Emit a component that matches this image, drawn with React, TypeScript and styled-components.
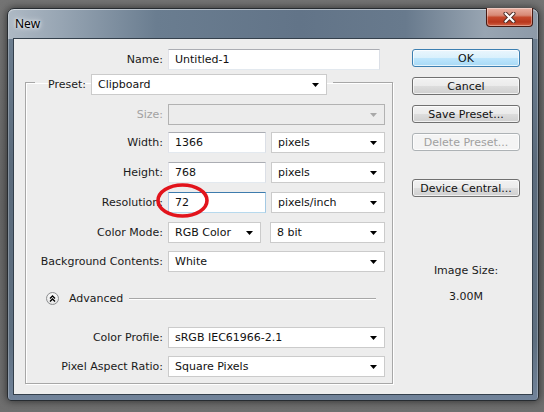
import React from 'react';
import styled, { createGlobalStyle } from 'styled-components';

const GlobalStyle = createGlobalStyle`
  html, body {
    margin: 0;
    padding: 0;
  }
  body {
    background: #6b6b6b;
    font-family: 'DejaVu Sans', Verdana, sans-serif;
    font-size: 11px;
    color: #1a1a1a;
  }
`;

const Desktop = styled.div`
  position: relative;
  width: 544px;
  height: 412px;
  box-sizing: border-box;
  padding: 8px 5px 0 7px;
  overflow: hidden;
  background: linear-gradient(180deg, #747474 0%, #676767 50%, #6f6f6f 100%);
`;

const Window = styled.div`
  width: 532px;
  height: 393px;
  box-sizing: border-box;
  border: 1px solid #272c31;
  border-radius: 7px 7px 4px 4px;
  padding: 0 5px 5px;
  display: flex;
  flex-direction: column;
  background:
    linear-gradient(90deg, #aeb9c4 0%, #97a5b3 10%, #6a7d90 28%, #627488 55%, #687a8d 75%, #98a5b2 90%, #8d9aa8 100%) top / 100% 30px no-repeat,
    linear-gradient(180deg, #6f8193 0%, #5b6b7c 40%, #5e6f80 85%, #71839a 100%);
  box-shadow: 0 0 8px rgba(0, 0, 0, 0.6), inset 0 1px 0 rgba(255, 255, 255, 0.5),
    inset 1px 0 0 rgba(255, 255, 255, 0.25), inset -1px 0 0 rgba(255, 255, 255, 0.25);
`;

const TitleBar = styled.div`
  height: 29px;
  display: flex;
  align-items: center;
`;

const Title = styled.span`
  padding-left: 2px;
  font-family: 'Noto Sans', 'Open Sans', sans-serif;
  font-size: 12px;
  color: #000;
  text-shadow: 0 0 6px #fff, 0 0 3px rgba(255, 255, 255, 0.9);
`;

const CloseButton = styled.div`
  margin: -1px 0 0 auto;
  align-self: flex-start;
  width: 47px;
  height: 19px;
  box-sizing: border-box;
  display: flex;
  align-items: center;
  justify-content: center;
  border: 1px solid #471a12;
  border-top: none;
  border-radius: 0 0 4px 4px;
  background: linear-gradient(180deg, #eab0a2 0%, #d88a76 40%, #c5492c 52%, #b8371d 78%, #d36649 100%);
  box-shadow: inset 0 0 0 1px rgba(255, 255, 255, 0.35);
`;

const Client = styled.div`
  flex: 1;
  display: flex;
  background: #ededed;
  border: 1px solid #34404c;
`;

const FormColumn = styled.div`
  display: flex;
  flex-direction: column;
  padding: 10px 0 0 11px;
`;

const Row = styled.div<{ $nudge?: number }>`
  display: flex;
  align-items: center;
  gap: 5px;
  height: 21px;
  margin-top: ${(p) => p.$nudge ?? 0}px;
`;

const Label = styled.span<{ $w: number; $disabled?: boolean }>`
  flex: none;
  width: ${(p) => p.$w}px;
  text-align: right;
  white-space: nowrap;
  color: ${(p) => (p.$disabled ? '#a2a2a2' : '#1a1a1a')};
`;

const TextField = styled.input<{ $w: number; $focus?: boolean }>`
  width: ${(p) => p.$w}px;
  height: 21px;
  box-sizing: border-box;
  margin: 0;
  padding: 0 6px;
  font: inherit;
  color: #111;
  background: #fff;
  outline: none;
  border: 1px solid;
  border-color: ${(p) =>
    p.$focus ? '#3d7bad #a4c9e3 #b7d9ed #b5cfe7' : '#abadb3 #dbdfe6 #e3e9ef #e2e3ea'};
`;

const Dropdown = styled.div<{ $w: number; $disabled?: boolean; $shift?: number }>`
  width: ${(p) => p.$w}px;
  height: 21px;
  box-sizing: border-box;
  margin-left: ${(p) => p.$shift ?? 0}px;
  display: flex;
  align-items: center;
  justify-content: space-between;
  padding: 0 7px 0 6px;
  white-space: nowrap;
  color: #111;
  border: 1px solid ${(p) => (p.$disabled ? '#b2b2b2' : '#cbcbcb')};
  background: ${(p) => (p.$disabled ? '#ececec' : '#fff')};
`;

const Group = styled.fieldset`
  width: 368px;
  min-width: 0;
  box-sizing: border-box;
  margin: -1px 0 0;
  padding: 9px 0 6px;
  border: 1px solid #a7a7a7;
  box-shadow: inset 1px 1px 0 #fff, 1px 1px 0 #fff;
  display: flex;
  flex-direction: column;
  gap: 9px;
`;

const Legend = styled.legend`
  margin-left: 9px;
  padding: 5px 6px 0 13px;
  display: flex;
  align-items: center;
  gap: 5px;
`;

const AdvancedRow = styled.div`
  display: flex;
  align-items: center;
  height: 14px;
  margin: 10px 16px 13px 20px;
`;

const RoundToggle = styled.div`
  width: 13px;
  height: 13px;
  box-sizing: border-box;
  border-radius: 50%;
  border: 1px solid #8d8f91;
  background: radial-gradient(circle at 50% 35%, #ffffff 0%, #f1f1f1 50%, #d6d6d6 100%);
  display: flex;
  align-items: center;
  justify-content: center;
`;

const AdvancedText = styled.span`
  margin: 0 6px 0 10px;
`;

const Rule = styled.div`
  flex: 1;
  height: 1px;
  background: #a7a7a7;
  box-shadow: 0 1px 0 #fff;
`;

const Side = styled.div`
  width: 108px;
  margin-left: 19px;
  padding-top: 10px;
  display: flex;
  flex-direction: column;
  gap: 10px;
`;

const Button = styled.button<{ $primary?: boolean; $gapAbove?: number }>`
  height: 18px;
  margin: ${(p) => p.$gapAbove ?? 0}px 0 0;
  padding: 0;
  font: inherit;
  color: #111;
  border-radius: 3px;
  border: 1px solid ${(p) => (p.$primary ? '#3c7fb1' : '#707070')};
  background: ${(p) =>
    p.$primary
      ? 'linear-gradient(180deg, #eaf6fd 0%, #d9f0fc 50%, #bee6fd 51%, #a7d9f5 100%)'
      : 'linear-gradient(180deg, #f2f2f2 0%, #ebebeb 50%, #dddddd 51%, #cfcfcf 100%)'};
  box-shadow: inset 0 0 0 1px rgba(255, 255, 255, 0.7);

  &:disabled {
    color: #a0a0a0;
    border-color: #adb2b5;
    background: #f4f4f4;
  }
`;

const SizeInfo = styled.div`
  margin-top: 57px;
  text-align: center;
  line-height: 13px;
`;

const SizeValue = styled.div`
  margin-top: 13px;
`;

const Annotation = styled.svg`
  position: absolute;
  left: 155px;
  top: 182px;
  pointer-events: none;
`;

const Caret = ({ color = '#000' }: { color?: string }) => (
  <svg width="7" height="4" viewBox="0 0 7 4">
    <path d="M0 0h7L3.5 4z" fill={color} />
  </svg>
);

const Select = ({
  w,
  value,
  disabled,
  shift,
}: {
  w: number;
  value?: string;
  disabled?: boolean;
  shift?: number;
}) => (
  <Dropdown $w={w} $disabled={disabled} $shift={shift}>
    <span>{value}</span>
    <Caret color={disabled ? '#a8a8a8' : '#000'} />
  </Dropdown>
);

export default function App() {
  return (
    <>
      <GlobalStyle />
      <Desktop>
        <Window>
          <TitleBar>
            <Title>New</Title>
            <CloseButton>
              <svg width="13" height="11" viewBox="0 0 13 11">
                <path d="M2.5 1.5l8 8M10.5 1.5l-8 8" stroke="#4a2a24" strokeWidth="4" strokeLinecap="round" />
                <path d="M2.5 1.5l8 8M10.5 1.5l-8 8" stroke="#fff" strokeWidth="2.2" strokeLinecap="round" />
              </svg>
            </CloseButton>
          </TitleBar>
          <Client>
            <FormColumn>
              <Row>
                <Label $w={138}>Name:</Label>
                <TextField $w={212} readOnly value="Untitled-1" />
              </Row>
              <Group>
                <Legend>
                  <span>Preset:</span>
                  <Select w={236} value="Clipboard" />
                </Legend>
                <Row>
                  <Label $w={137} $disabled>Size:</Label>
                  <Select w={217} disabled />
                </Row>
                <Row $nudge={-2}>
                  <Label $w={137}>Width:</Label>
                  <TextField $w={98} readOnly value="1366" />
                  <Select w={114} value="pixels" />
                </Row>
                <Row>
                  <Label $w={137}>Height:</Label>
                  <TextField $w={98} readOnly value="768" />
                  <Select w={114} value="pixels" />
                </Row>
                <Row>
                  <Label $w={137}>Resolution:</Label>
                  <TextField $w={98} $focus readOnly value="72" />
                  <Select w={114} value="pixels/inch" />
                </Row>
                <Row>
                  <Label $w={137}>Color Mode:</Label>
                  <Select w={93} value="RGB Color" />
                  <Select w={115} value="8 bit" shift={4} />
                </Row>
                <Row $nudge={-1}>
                  <Label $w={137}>Background Contents:</Label>
                  <Select w={217} value="White" />
                </Row>
                <AdvancedRow>
                  <RoundToggle>
                    <svg width="9" height="9" viewBox="0 0 9 9">
                      <path d="M2 4.5L4.5 2 7 4.5M2 7.5L4.5 5 7 7.5" fill="none" stroke="#000" strokeWidth="1.4" />
                    </svg>
                  </RoundToggle>
                  <AdvancedText>Advanced</AdvancedText>
                  <Rule />
                </AdvancedRow>
                <Row>
                  <Label $w={137}>Color Profile:</Label>
                  <Select w={217} value="sRGB IEC61966-2.1" />
                </Row>
                <Row $nudge={-1}>
                  <Label $w={137}>Pixel Aspect Ratio:</Label>
                  <Select w={217} value="Square Pixels" />
                </Row>
              </Group>
            </FormColumn>
            <Side>
              <Button $primary>OK</Button>
              <Button>Cancel</Button>
              <Button>Save Preset...</Button>
              <Button disabled>Delete Preset...</Button>
              <Button $gapAbove={18}>Device Central...</Button>
              <SizeInfo>
                <div>Image Size:</div>
                <SizeValue>3.00M</SizeValue>
              </SizeInfo>
            </Side>
          </Client>
        </Window>
        <Annotation width="56" height="38" viewBox="0 0 56 38">
          <ellipse cx="27.5" cy="18.5" rx="24.5" ry="15.5" fill="none" stroke="#e2141c" strokeWidth="3.6" />
        </Annotation>
      </Desktop>
    </>
  );
}
